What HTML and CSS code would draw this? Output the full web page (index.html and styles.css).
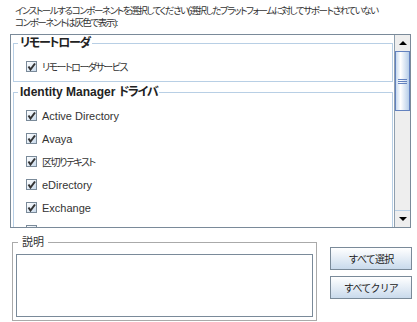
FILE: index.html
```html
<!DOCTYPE html>
<html>
<head>
    <meta charset="utf-8">
    <link rel="stylesheet" href="styles.css">
</head>
<body>
    <div class="intro">インストールするコンポーネントを選択してください(選択したプラットフォームに対してサポートされていない<br>コンポーネントは灰色で表示):</div>

    <div class="pane">
        <div class="viewport">
            <fieldset class="group">
                <legend><span class="ja">リモートローダ</span></legend>
                <div class="items">
                    <label class="item"><span class="check"><svg width="9" height="9" viewBox="0 0 9 9"><path d="M1.5 4.5 L3.5 7.5 L8 1.5" fill="none" stroke="#333" stroke-width="2"/></svg></span><span class="ja">リモートローダサービス</span></label>
                </div>
            </fieldset>
            <fieldset class="group">
                <legend>Identity Manager <span class="ja">ドライバ</span></legend>
                <div class="items">
                    <label class="item"><span class="check"><svg width="9" height="9" viewBox="0 0 9 9"><path d="M1.5 4.5 L3.5 7.5 L8 1.5" fill="none" stroke="#333" stroke-width="2"/></svg></span>Active Directory</label>
                    <label class="item"><span class="check"><svg width="9" height="9" viewBox="0 0 9 9"><path d="M1.5 4.5 L3.5 7.5 L8 1.5" fill="none" stroke="#333" stroke-width="2"/></svg></span>Avaya</label>
                    <label class="item"><span class="check"><svg width="9" height="9" viewBox="0 0 9 9"><path d="M1.5 4.5 L3.5 7.5 L8 1.5" fill="none" stroke="#333" stroke-width="2"/></svg></span><span class="ja">区切りテキスト</span></label>
                    <label class="item"><span class="check"><svg width="9" height="9" viewBox="0 0 9 9"><path d="M1.5 4.5 L3.5 7.5 L8 1.5" fill="none" stroke="#333" stroke-width="2"/></svg></span>eDirectory</label>
                    <label class="item"><span class="check"><svg width="9" height="9" viewBox="0 0 9 9"><path d="M1.5 4.5 L3.5 7.5 L8 1.5" fill="none" stroke="#333" stroke-width="2"/></svg></span>Exchange</label>
                    <label class="item"><span class="check"><svg width="9" height="9" viewBox="0 0 9 9"><path d="M1.5 4.5 L3.5 7.5 L8 1.5" fill="none" stroke="#333" stroke-width="2"/></svg></span></label>
                </div>
            </fieldset>
        </div>
        <div class="scrollbar">
            <div class="arrow up"></div>
            <div class="track">
                <div class="thumb">
                    <svg width="9" height="5" viewBox="0 0 9 5"><path d="M0 0.5 H9 M0 2.5 H9 M0 4.5 H9" stroke="#6382bf" stroke-width="1"/></svg>
                </div>
            </div>
            <div class="arrow down"></div>
        </div>
    </div>

    <div class="bottom">
        <fieldset class="desc">
            <legend>説明</legend>
            <div class="desc-box"></div>
        </fieldset>
        <div class="buttons">
            <button>すべて選択</button>
            <button>すべてクリア</button>
        </div>
    </div>
</body>
</html>
```

FILE: styles.css
```css
body {
    margin: 0;
    background: #fff;
    color: #333;
    font-family: "Liberation Sans", "Noto Sans CJK JP", sans-serif;
    font-size: 11px;
    font-feature-settings: "palt";
}

.intro {
    box-sizing: border-box;
    height: 34px;
    padding: 5px 0 0 15px;
    line-height: 12px;
    font-size: 9.5px;
    letter-spacing: -1.4px;
    white-space: nowrap;
}

.ja {
    font-size: 10px;
    letter-spacing: -1.5px;
}

.pane {
    display: flex;
    box-sizing: border-box;
    width: 401px;
    height: 194px;
    margin-left: 10px;
    border: 1px solid #7a8a99;
}
.viewport {
    flex: 1;
    overflow: hidden;
    padding: 0 1px 0 2px;
}

.group {
    margin: 0 0 2px 0;
    padding: 0 0 3px 4px;
    border: 1px solid #b8cfe5;
}
.group legend {
    padding: 0 2px;
    font-size: 12px;
    font-weight: bold;
    line-height: 16px;
    color: #222;
}
.group legend .ja {
    font-size: 12px;
    letter-spacing: -1.3px;
}
.items {
    padding: 4px 0 0 8px;
}
.item {
    display: flex;
    align-items: center;
    gap: 5px;
    height: 23px;
}
.check {
    display: flex;
    align-items: center;
    justify-content: center;
    box-sizing: border-box;
    width: 11px;
    height: 11px;
    border: 1px solid #7a8a99;
    background: linear-gradient(135deg, #ffffff, #c9daec);
}

.scrollbar {
    display: flex;
    flex-direction: column;
    box-sizing: border-box;
    width: 16px;
    background: #eeeeee;
    border-left: 1px solid #8f9fae;
}
.arrow {
    display: flex;
    align-items: center;
    justify-content: center;
    height: 16px;
}
.arrow::before {
    content: "";
    border-left: 4px solid transparent;
    border-right: 4px solid transparent;
}
.up::before {
    border-bottom: 4px solid #000;
}
.down {
    border-top: 1px solid #b8cfe5;
}
.down::before {
    border-top: 4px solid #000;
}
.track {
    flex: 1;
}
.thumb {
    display: flex;
    align-items: center;
    justify-content: center;
    box-sizing: border-box;
    height: 60px;
    border: 1px solid #6382bf;
    background: linear-gradient(to right, #c8dbf0, #ffffff 35%, #b6cde8);
}

.bottom {
    display: flex;
    gap: 13px;
    margin-top: 8px;
    padding-left: 12px;
}
.desc {
    box-sizing: border-box;
    width: 305px;
    margin: 0;
    padding: 0 3px 3px 3px;
    border: 1px solid #aaaaaa;
}
.desc legend {
    margin-left: 2px;
    padding: 0 4px;
    line-height: 12px;
    font-size: 11px;
}
.desc-box {
    box-sizing: border-box;
    height: 63px;
    margin-top: 6px;
    border: 1px solid #7a8a99;
    background: #fff;
}

.buttons {
    display: flex;
    flex-direction: column;
    gap: 6px;
    padding-top: 11px;
}
button {
    width: 82px;
    height: 23px;
    padding: 0;
    border: 1px solid #7a8a99;
    background: linear-gradient(#ffffff, #c9daec);
    font-family: inherit;
    font-size: 10px;
    letter-spacing: -0.8px;
    color: #222;
}
```
